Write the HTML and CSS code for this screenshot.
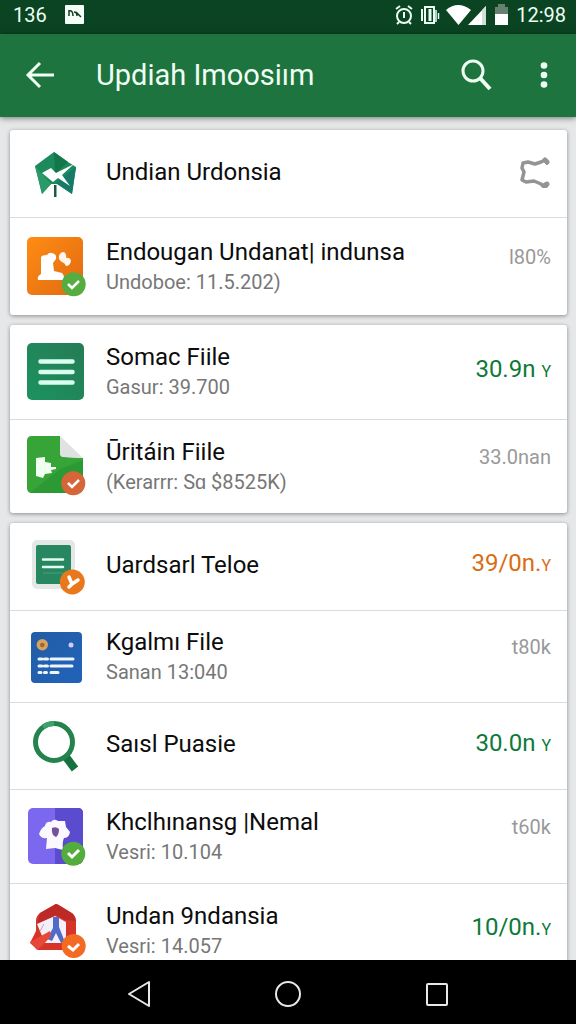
FILE: index.html
```html
<!DOCTYPE html>
<html lang="id">
<head>
    <meta charset="UTF-8">
    <meta name="viewport" content="width=device-width, initial-scale=1.0">
    <title>Updiah Imoosiım</title>
    <link rel="stylesheet" href="styles.css">
</head>
<body>
    <div class="status-bar">
        <span>136</span>
        <svg class="status-app" width="20" height="20" viewBox="0 0 20 20">
            <rect width="19" height="19" x="0" y="0" rx="1" fill="#f4fff8"/>
            <path d="M4 5v6M4 6q4-1 4 5M9 7q3 0 3 4M11 7l5 5" fill="none" stroke="#123d24" stroke-width="1.5"/>
        </svg>
        <div class="status-icons">
            <svg width="20" height="22" viewBox="0 0 20 22" fill="none" stroke="#eafff2" stroke-width="2">
                <circle cx="10" cy="12" r="7"/>
                <path d="M2 5l4-3M18 5l-4-3M10 8v6M5 18l-2 2M15 18l2 2"/>
            </svg>
            <svg class="vibrate" width="20" height="22" viewBox="0 0 20 22" fill="none" stroke="#eafff2">
                <path d="M2 5v12" stroke-width="2"/>
                <rect x="5" y="3" width="9" height="16" stroke-width="2"/>
                <path d="M10 5v12" stroke-width="3"/>
                <path d="M16 6v12M18.500 9v6" stroke-width="1.500"/>
            </svg>
            <svg width="42" height="22" viewBox="0 0 42 22">
                <path d="M0 6Q12-4 25 6L12.500 21z" fill="#fff"/>
                <path d="M22 21L40 2v19z" fill="#fff"/>
                <path d="M36 6l4-4v19h-4z" fill="#cfe0d5"/>
            </svg>
            <svg class="battery" width="15" height="22" viewBox="0 0 15 22">
                <path d="M4 0h7v3h3v8H1V3h3z" fill="#66816f"/>
                <path d="M1 10h13v11H1z" fill="#fff"/>
            </svg>
        </div>
        <span>12:98</span>
    </div>

    <header class="app-bar">
        <button class="icon-button" type="button" aria-label="Kembali">
            <svg width="32" height="32" viewBox="0 0 32 32" fill="none" stroke="#effff4" stroke-width="3">
                <path d="M30 16H4M16 4L4 16l12 12"/>
            </svg>
        </button>
        <h1 class="app-title">Updiah Imoosiım</h1>
        <button class="icon-button" type="button" aria-label="Cari">
            <svg width="32" height="32" viewBox="0 0 32 32" fill="none" stroke="#effff4">
                <circle cx="13" cy="12" r="10" stroke-width="3"/>
                <path d="M20 19l10 11" stroke-width="4"/>
            </svg>
        </button>
        <button class="icon-button menu" type="button" aria-label="Menu">
            <svg width="8" height="32" viewBox="0 0 8 32" fill="#effff4">
                <circle cx="4" cy="6.500" r="3.300"/>
                <circle cx="4" cy="16" r="3.300"/>
                <circle cx="4" cy="25.500" r="3.300"/>
            </svg>
        </button>
    </header>

    <main class="content">
        <section class="card">
            <div class="row">
                <svg class="row-icon" viewBox="0 0 60 64">
                    <path d="M28 10L9 24l7 28 9-10h6l15 10 4-27-8-5z" fill="#1c8a5b"/>
                    <path d="M28 10l14 10-13 12z" fill="#13774a"/>
                    <path d="M50 25l-4 27-16-11z" fill="#157b68"/>
                    <path d="M9 24l7 28 9-10z" fill="#2a9a68"/>
                    <path d="M28 43h2.500v12H28z" fill="#1b5a45"/>
                    <path d="M16 31l9-5 5 5 18-9-12 11 8 11-12-8-5 4z" fill="#fff"/>
                </svg>
                <div class="row-text">
                    <h2 class="row-title">Undian Urdonsia</h2>
                </div>
                <button class="icon-button share" type="button" aria-label="Bagikan">
                    <svg width="32" height="32" viewBox="0 0 32 32" fill="none" stroke="#949494" stroke-width="3.500" stroke-linejoin="round" stroke-linecap="round">
                        <path d="M28 7l-2-3-4 2-6 2-7-2-5 1-1 5 2 4-2 8 4 2 8-1 7 3 4 4 2-3"/>
                        <path d="M26 4l2 2M26 29l2-1" stroke-width="5"/>
                    </svg>
                </button>
            </div>
            <div class="row row-large">
                <svg class="row-icon" viewBox="0 0 60 64">
                    <defs>
                        <linearGradient id="orange" x1="0" y1="0" x2="1" y2="1">
                            <stop offset="0" stop-color="#ff8c14"/>
                            <stop offset="1" stop-color="#e06a10"/>
                        </linearGradient>
                    </defs>
                    <rect x="1" y="2" width="56" height="58" rx="5" fill="url(#orange)"/>
                    <path d="M15 22q1-2 6-2 2-3 5-2 5 1 4 6l-3 4 1 8 8 2q3 3 2 7H12q-1-4 3-6z" fill="#fff"/>
                    <path d="M33 21q1-4 5-4 3 2 2 6 4-1 5 3-1 5-5 5-1-3-4-4-4-2-3-6z" fill="#fff4e8"/>
                    <circle cx="47.700" cy="49.300" r="12" fill="#55ad41"/>
                    <path d="M42 49l4 4 7-7" fill="none" stroke="#fff" stroke-width="2.500"/>
                </svg>
                <div class="row-text">
                    <h2 class="row-title">Endougan Undanat| indunsa</h2>
                    <p class="row-detail">Undoboe: 11.5.202)</p>
                </div>
                <span class="row-note">l80%</span>
            </div>
        </section>

        <section class="card">
            <div class="row row-medium">
                <svg class="row-icon" viewBox="0 0 60 64">
                    <defs>
                        <linearGradient id="teal" x1="0" y1="1" x2="1" y2="0">
                            <stop offset="0" stop-color="#1b935f"/>
                            <stop offset="1" stop-color="#267b55"/>
                        </linearGradient>
                    </defs>
                    <rect x="1" y="3" width="57" height="57" rx="5" fill="url(#teal)"/>
                    <path d="M14.500 21.500h32M14.500 32h32M14.500 42.500h32" stroke="#d9fff0" stroke-width="4.500" stroke-linecap="round"/>
                </svg>
                <div class="row-text">
                    <h2 class="row-title">Somac Fiile</h2>
                    <p class="row-detail">Gasur: 39.700</p>
                </div>
                <span class="row-value">30.9n <small>Y</small></span>
            </div>
            <div class="row row-medium">
                <svg class="row-icon" viewBox="0 0 60 64">
                    <path d="M6 1h28v17q0 4 4 4l19 1v30q0 5-5 5H6q-5 0-5-5V6q0-5 5-5z" fill="#36a436"/>
                    <path d="M4 58l30-24 23-9v28q0 5-5 5z" fill="#2b9a35"/>
                    <path d="M34 1l23 22-19-1q-4 0-4-4z" fill="#dfe2e1"/>
                    <path d="M10 23l9-1v5l6 1v4h5v2l-5 1 1 3-7 1-2 4-7-2z" fill="#f1fff0"/>
                    <circle cx="47.300" cy="48.300" r="12" fill="#d66539"/>
                    <path d="M42 48l4 4 7-7" fill="none" stroke="#fff" stroke-width="2.500"/>
                </svg>
                <div class="row-text">
                    <h2 class="row-title">Ūritáin Fiile</h2>
                    <p class="row-detail">(Kerarrr: Sɑ $8525K)</p>
                </div>
                <span class="row-note">33.0nan</span>
            </div>
        </section>

        <section class="card">
            <div class="row">
                <svg class="row-icon" viewBox="0 0 60 64">
                    <rect x="6" y="5" width="43" height="49" rx="5" fill="#e3e7e5"/>
                    <rect x="10" y="10" width="35" height="39" rx="2" fill="#278760"/>
                    <path d="M17 24.500h20M17 32h20" stroke="#e5fff1" stroke-width="2.500" stroke-linecap="round"/>
                    <path d="M17 38h20" stroke="#4ca17c"/>
                    <circle cx="46.300" cy="47" r="12.500" fill="#e9781d"/>
                    <path d="M43 42l3 7-3 3M46 49l6-4" fill="none" stroke="#fff" stroke-width="3.500" stroke-linecap="round"/>
                </svg>
                <div class="row-text">
                    <h2 class="row-title">Uardsarl Teloe</h2>
                </div>
                <span class="row-value warning">39/0n.<small>Y</small></span>
            </div>
            <div class="row row-small">
                <svg class="row-icon" viewBox="0 0 60 64">
                    <defs>
                        <linearGradient id="blue" x1="0" y1="0" x2="1" y2="1">
                            <stop offset="0" stop-color="#235da5"/>
                            <stop offset="1" stop-color="#2162b9"/>
                        </linearGradient>
                    </defs>
                    <rect x="5" y="7" width="51" height="51" rx="4" fill="url(#blue)"/>
                    <circle cx="16.300" cy="19.700" r="5.700" fill="#d4a261"/>
                    <circle cx="16.300" cy="20" r="2.300" fill="#a56335"/>
                    <circle cx="45" cy="20" r="2.500" fill="#d8cafb"/>
                    <path d="M13 34h3M18.500 34h3M25 34h22M13 41h3M18.500 41h3M25 41h21M13 47.500h2M18.500 47.500h2M25 47.500h7" stroke="#edf5ff" stroke-width="3" stroke-linecap="round"/>
                </svg>
                <div class="row-text">
                    <h2 class="row-title">Kgalmı File</h2>
                    <p class="row-detail">Sanan 13:040</p>
                </div>
                <span class="row-note">t80k</span>
            </div>
            <div class="row">
                <svg class="row-icon" viewBox="0 0 60 64" fill="none">
                    <path d="M40 43l9 12" stroke="#15713f" stroke-width="8"/>
                    <circle cx="28" cy="28" r="18.500" stroke="#24834c" stroke-width="5"/>
                    <path d="M17 13q5-3.500 11-3.500" stroke="#3ba269" stroke-width="5"/>
                </svg>
                <div class="row-text">
                    <h2 class="row-title">Saısl Puasie</h2>
                </div>
                <span class="row-value">30.0n <small>Y</small></span>
            </div>
            <div class="row row-medium">
                <svg class="row-icon" viewBox="0 0 60 64">
                    <rect x="2" y="3" width="55" height="56" rx="5" fill="#7b68ee"/>
                    <path d="M29 3h23q5 0 5 5v46q0 5-5 5H29z" fill="#5a4bcf"/>
                    <path d="M19 21q1-5 6-4 3-4 7-1l7 0 1 6 4 5q-1 6-6 6-2 4-1 12l-8-2-9 1 1-11q-6 1-8-4 2-6 6-8z" fill="#fbf8ff"/>
                    <path d="M26 23q4-2 7 1 0 6-3 8-5-2-4-9z" fill="#76509a"/>
                    <circle cx="47.300" cy="48.700" r="12" fill="#52ad3d"/>
                    <path d="M42 48l4 4 7-7" fill="none" stroke="#fff" stroke-width="3"/>
                </svg>
                <div class="row-text">
                    <h2 class="row-title">Khclhınansg |Nemal</h2>
                    <p class="row-detail">Vesri: 10.104</p>
                </div>
                <span class="row-note">t60k</span>
            </div>
            <div class="row row-medium">
                <svg class="row-icon" viewBox="0 0 60 64">
                    <path d="M28 6q2-2 5 0l13 8q4 3 4 8v29H12L4 44l6-12V22q0-5 4-8z" fill="#d63429"/>
                    <path d="M30 5l17 10 3 7-11-1-9-5-19 9 3-11z" fill="#bd2926"/>
                    <path d="M11 25l18-8 11 6v21H19z" fill="#f3f0fc"/>
                    <path d="M27 18h6v10l6 15-4 1-5-10-4 8-5-2 6-11z" fill="#526bc6"/>
                    <path d="M4 43l20-11 1 5-7 8-7 6z" fill="#e74838"/>
                    <path d="M14 32l4-7" stroke="#d69ba7" stroke-width="1"/>
                    <circle cx="47.700" cy="47" r="12" fill="#f36b22"/>
                    <path d="M42 47l5 4 6-6" fill="none" stroke="#fff" stroke-width="3"/>
                </svg>
                <div class="row-text">
                    <h2 class="row-title">Undan 9ndansia</h2>
                    <p class="row-detail">Vesri: 14.057</p>
                </div>
                <span class="row-value">10/0n.<small>Y</small></span>
            </div>
        </section>
    </main>

    <nav class="nav-bar">
        <button class="icon-button" type="button" aria-label="Kembali">
            <svg width="28" height="28" viewBox="0 0 28 28" fill="none" stroke="#e8e8e8" stroke-width="2" stroke-linejoin="round">
                <path d="M24 2v24L4 14z"/>
            </svg>
        </button>
        <button class="icon-button" type="button" aria-label="Beranda">
            <svg width="28" height="28" viewBox="0 0 28 28" fill="none" stroke="#e8e8e8" stroke-width="2">
                <circle cx="14" cy="14" r="12"/>
            </svg>
        </button>
        <button class="icon-button" type="button" aria-label="Terbaru">
            <svg width="28" height="28" viewBox="0 0 28 28" fill="none" stroke="#e8e8e8" stroke-width="2">
                <rect x="4" y="4" width="20" height="21" rx="1"/>
            </svg>
        </button>
    </nav>
</body>
</html>
```
FILE: styles.css
```css
* {
    box-sizing: border-box;
}

body {
    display: flex;
    flex-direction: column;
    height: 100vh;
    margin: 0;
    background-color: #e6e7e9;
    font-family: Roboto, "Liberation Sans", sans-serif;
    overflow: hidden;
}

h1, h2, p {
    margin: 0;
    font-weight: 400;
}

svg {
    display: block;
    flex: none;
}

.status-bar {
    display: flex;
    flex: none;
    align-items: center;
    height: 34px;
    padding: 0 10px 4px 13px;
    background-color: #0b4422;
    color: #effff4;
    font-size: 20px;
}

.status-app {
    margin-left: 18px;
}

.status-icons {
    display: flex;
    gap: 6px;
    margin-left: auto;
    margin-right: 7px;
}

.app-bar {
    display: flex;
    flex: none;
    align-items: center;
    height: 83px;
    padding: 0 28px 2px 24px;
    background-color: #1e743f;
    color: #effff4;
    box-shadow: 0 1px 6px rgba(0, 0, 0, 0.5);
}

.app-title {
    flex: 1;
    margin-left: 40px;
    font-size: 29px;
    line-height: 36px;
}

.icon-button {
    display: block;
    padding: 0;
    border: 0;
    background: none;
    cursor: pointer;
}

.menu {
    margin-left: 48px;
}

.share {
    padding-bottom: 4px;
}

.content {
    display: flex;
    flex: 1;
    flex-direction: column;
    gap: 10px;
    min-height: 0;
    padding: 13px 9px 0 10px;
    overflow: hidden;
}

.card {
    flex: none;
    background-color: #fff;
    border-radius: 3px;
    box-shadow: 0 1px 4px rgba(0, 0, 0, 0.4);
}

.row {
    display: flex;
    align-items: center;
    gap: 20px;
    min-height: 87px;
    padding: 0 16px;
}

.row-small {
    min-height: 92px;
}

.row-medium {
    min-height: 94px;
}

.row-large {
    min-height: 98px;
}

.row + .row {
    border-top: 1px solid #d9dcde;
}

.row-icon {
    width: 60px;
    height: 64px;
}

.row-text {
    flex: 1;
    min-width: 0;
    white-space: nowrap;
}

.row-title {
    color: #0c0c0c;
    font-size: 24px;
    line-height: 30px;
}

.row-title:only-child {
    padding-bottom: 4px;
}

.row-detail {
    color: #777;
    font-size: 20px;
    line-height: 30px;
}

.row-value {
    padding-bottom: 4px;
    color: #0c7a38;
    font-size: 24px;
    line-height: 30px;
}

.row-value small {
    font-size: 16px;
}

.warning {
    color: #d96c14;
}

.row-note {
    padding-bottom: 20px;
    color: #999;
    font-size: 20px;
    line-height: 24px;
}

.nav-bar {
    display: flex;
    flex: none;
    align-items: center;
    justify-content: center;
    gap: 121px;
    height: 64px;
    padding-top: 4px;
    background-color: #000;
}
```
